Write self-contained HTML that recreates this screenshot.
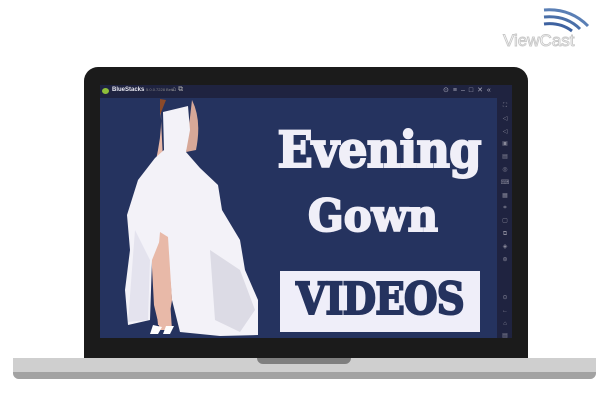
<!DOCTYPE html>
<html><head><style>
*{margin:0;padding:0;box-sizing:border-box}
body{width:602px;height:414px;background:#fff;position:relative;overflow:hidden;font-family:"Liberation Sans",sans-serif}
.abs{position:absolute}
.t{font-family:'DejaVu Serif',serif;font-weight:bold;text-align:center;-webkit-text-stroke:2px currentColor}
</style></head><body>
<svg class="abs" style="left:500px;top:4px" width="100" height="50" viewBox="0 0 100 50">
<path d="M44 6 Q70 4 88 22" stroke="#5a7fb5" stroke-width="3" fill="none"/>
<path d="M44 13 Q66 11 80 25" stroke="#4a6fa8" stroke-width="3" fill="none"/>
<path d="M44 20 Q60 18 72 27" stroke="#3e62a0" stroke-width="3" fill="none"/>
<text x="3" y="42" font-family="Liberation Sans" font-size="17" fill="#fff" stroke="#c8c8c8" stroke-width="0.9">ViewCast</text>
</svg>
<div class="abs" style="left:84px;top:67px;width:444px;height:292px;background:#1b1b1b;border-radius:14px 14px 0 0"></div>
<div class="abs" style="left:13px;top:358px;width:583px;height:21px;background:#cfcfcf;border-radius:0 0 6px 6px;overflow:hidden">
 <div style="position:absolute;left:0;right:0;bottom:0;height:7px;background:#a2a2a2"></div>
</div>
<div class="abs" style="left:257px;top:358px;width:94px;height:6px;background:#7f7f7f;border-radius:0 0 6px 6px"></div>
<div class="abs" style="left:100px;top:85px;width:412px;height:13px;background:#1f2340"></div>
<div class="abs" style="left:102px;top:88px;width:7px;height:6px;background:#8fbf3a;border-radius:50%"></div>
<div class="abs" style="left:112px;top:87px;font-size:6px;color:#e8e8f0;font-weight:bold">BlueStacks <span style="font-size:4px;color:#888;font-weight:normal">5.0.0.7228 Beta</span></div>
<div class="abs" style="left:172px;top:86px;font-size:7px;color:#aaa">⌂ ⧉</div>
<div class="abs" style="left:443px;top:86px;font-size:7px;color:#aab;letter-spacing:4px">⊙≡–□✕«</div>
<div class="abs" style="left:100px;top:98px;width:397px;height:240px;background:#25335f;overflow:hidden">
<svg width="397" height="240" viewBox="100 98 397 240" style="position:absolute;left:0;top:0">
 <path d="M160 99 Q163 125 158 150 L152 180 L150 230 L154 305 L160 330 L172 330 L170 300 L167 240 Z" fill="#e8b9a8"/>
 <path d="M192 100 Q202 120 196 150 L186 152 Z" fill="#d7a898"/>
 <path d="M160 99 L160 115 L166 100 Z" fill="#8b4a2a"/>
 <path d="M163 112 L188 106 L190 130 L186 152 L200 168 L218 185 L222 210 L240 240 L245 270 L258 300 L258 335 L220 336 L180 332 L172 300 L168 250 L160 240 L152 260 L150 320 L128 325 L125 290 L130 250 L127 215 L138 180 L155 158 L164 150 Z" fill="#f3f2f8"/>
 <path d="M135 230 L150 260 L148 320 L128 322 Z" fill="#e4e3ee"/>
 <path d="M210 250 L240 270 L255 310 L240 332 L215 320 Z" fill="#d6d5e0" opacity=".8"/>
 <path d="M160 232 L168 237 L172 300 L168 325 L158 325 L155 290 Z" fill="#e8b9a8"/>
 <path d="M153 325 L162 327 L158 334 L150 334 Z M166 326 L174 326 L170 334 L163 334 Z" fill="#fff"/>
</svg>
<div class="abs t" style="left:170px;top:22px;width:210px;font-size:50px;color:#f0eff8;transform:scaleX(.93);letter-spacing:-1px">Evening</div>
<div class="abs t" style="left:168px;top:93px;width:210px;font-size:44px;color:#f0eff8;transform:scaleX(.95)">Gown</div>
<div class="abs" style="left:180px;top:173px;width:200px;height:61px;background:#efeef9"></div>
<div class="abs t" style="left:175px;top:176px;width:210px;font-size:44px;color:#25335f;transform:scaleX(.88);letter-spacing:-1px">VIDEOS</div>
</div>
<div class="abs" style="left:497px;top:98px;width:15px;height:240px;background:#1f2340"></div>
<div class="abs" style="left:500px;top:100px;width:10px;font-size:6px;color:#889;line-height:12.8px;text-align:center">⛶<br>◁<br>◁<br>▣<br>▤<br>◎<br>⌨<br>▦<br>⌗<br>▢<br>⧉<br>◈<br>⊛<br><br><br>⊙<br>←<br>⌂<br>▤</div>
</body></html>
